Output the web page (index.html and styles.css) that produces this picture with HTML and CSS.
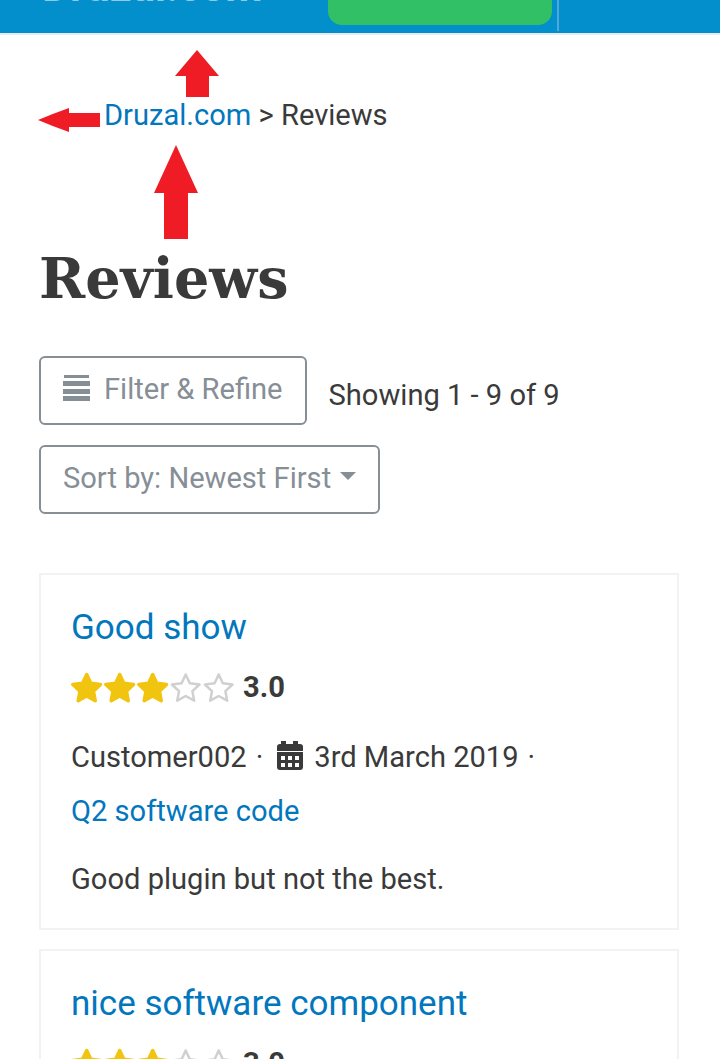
FILE: index.html
```html
<!DOCTYPE html>
<html lang="en">
<head>
  <meta charset="UTF-8" />
  <meta name="viewport" content="width=device-width, initial-scale=1.0"/>
  <title>Reviews</title>
  <link rel="stylesheet" href="styles.css">
</head>
<body>
  <svg class="defs" width="0" height="0">
    <symbol id="star" viewBox="0 0 33 32">
      <path d="M15.7 2.5L19.8 11.3 29.5 12.5 22.4 19.2 24.2 28.7 15.7 24 7.2 28.7 9 19.2 1.9 12.5 11.6 11.3z"/>
    </symbol>
  </svg>

  <header class="topbar">
    <div class="logo">Druzal.com</div>
    <div class="cta"></div>
    <div class="divider"></div>
  </header>

  <main class="page">
    <svg class="arrow arrow-top" viewBox="0 0 44 47"><path d="M22 0L44 26H34V47H11V26H0z"/></svg>
    <svg class="arrow arrow-left" viewBox="0 0 62 24"><path d="M0 12Q14 6 31 0V5H62V19H31V24Q14 18 0 12z"/></svg>
    <svg class="arrow arrow-bottom" viewBox="0 0 44 94"><path d="M22 0L44 48H34V94H10V48H0z"/></svg>

    <p class="crumbs"><a href="#">Druzal.com</a> &gt; Reviews</p>
    <h1>Reviews</h1>

    <div class="toolbar">
      <button type="button" class="btn">
        <svg class="bars" viewBox="0 0 27 26"><path d="M1 0h25v3H1zM0 6h27v5H0zM0 14h27v5H0zM0 21h27v5H0z"/></svg>
        Filter &amp; Refine
      </button>
      <span class="count">Showing 1 - 9 of 9</span>
      <button type="button" class="btn">Sort by: Newest First<span class="caret"></span></button>
    </div>

    <article class="card">
      <h2><a href="#">Good show</a></h2>
      <div class="rating">
        <svg class="star on"><use href="#star"/></svg>
        <svg class="star on"><use href="#star"/></svg>
        <svg class="star on"><use href="#star"/></svg>
        <svg class="star"><use href="#star"/></svg>
        <svg class="star"><use href="#star"/></svg>
        <strong>3.0</strong>
      </div>
      <div class="meta">
        <span>Customer002</span><span>·</span>
        <svg class="cal" viewBox="0 0 26 29"><path fill-rule="evenodd" d="M4 0h5v3h7V0h5v3h2a3 3 0 0 1 3 3v4H0V6a3 3 0 0 1 3-3h1zM0 11h26v15a3 3 0 0 1-3 3H3a3 3 0 0 1-3-3zM4 15v4h4v-4zM11 15v4h4v-4zM18 15v4h4v-4zM4 22v4h4v-4zM11 22v4h4v-4zM18 22v4h4v-4z"/></svg>
        <span>3rd March 2019</span><span>·</span>
      </div>
      <a class="product" href="#">Q2 software code</a>
      <p>Good plugin but not the best.</p>
    </article>

    <article class="card">
      <h2><a href="#">nice software component</a></h2>
      <div class="rating">
        <svg class="star on"><use href="#star"/></svg>
        <svg class="star on"><use href="#star"/></svg>
        <svg class="star on"><use href="#star"/></svg>
        <svg class="star"><use href="#star"/></svg>
        <svg class="star"><use href="#star"/></svg>
        <strong>3.0</strong>
      </div>
    </article>
  </main>
</body>
</html>
```

FILE: styles.css
```css
html, body {
  height: 1059px;
  overflow: hidden;
}
body {
  margin: 0;
  background: #fff;
  color: #3a3a3a;
  font-family: Roboto, sans-serif;
  font-size: 29.1px;
  line-height: 1.5;
}
a {
  color: #0277bd;
  text-decoration: none;
}
.defs {
  position: absolute;
}
.topbar {
  display: flex;
  align-items: flex-end;
  height: 33px;
  overflow: hidden;
  background: #038fcc;
  border-bottom: 2px solid #e8eaeb;
}
.logo {
  width: 286px;
  margin: 0 0 28px 42px;
  color: #8fcbe6;
  font-size: 43px;
  font-weight: 700;
  line-height: 38px;
  white-space: nowrap;
}
.cta {
  width: 224px;
  height: 25px;
  margin-bottom: 8px;
  background: #32c067;
  border-radius: 0 0 14px 14px;
}
.divider {
  width: 2px;
  height: 31px;
  margin: 0 0 2px 5px;
  background: #4fa9d8;
}
.page {
  position: relative;
  padding: 0 40px;
}
.arrow {
  position: absolute;
  fill: #ef1c25;
}
.arrow-top {
  left: 175px;
  top: 15px;
  width: 44px;
  height: 47px;
}
.arrow-left {
  left: 38px;
  top: 73px;
  width: 62px;
  height: 24px;
}
.arrow-bottom {
  left: 154px;
  top: 110px;
  width: 44px;
  height: 94px;
}
.crumbs {
  margin: 0;
  padding: 60px 0 0 64px;
  line-height: 41px;
}
h1 {
  margin: 110px 0 0 -1px;
  font-family: "DejaVu Serif", serif;
  font-size: 55.6px;
  font-weight: 700;
  line-height: 66px;
}
.toolbar {
  display: flex;
  flex-wrap: wrap;
  align-items: center;
  gap: 20px 22px;
  margin: 44px 0 59px -1px;
}
.btn {
  display: flex;
  align-items: center;
  height: 69px;
  padding: 0 22px 1px;
  background: #fff;
  border: 2px solid #868e96;
  border-radius: 6px;
  color: #868e96;
  font: inherit;
}
.bars {
  width: 27px;
  height: 26px;
  margin: 0 14px 4px 0;
  fill: #868e96;
}
.caret {
  width: 0;
  height: 0;
  margin: 0 0 6px 9px;
  border-top: 8px solid #868e96;
  border-left: 8px solid transparent;
  border-right: 8px solid transparent;
}
.count {
  padding-top: 10px;
  margin-right: 100px;
}
.card {
  margin: 0 1px 19px -1px;
  padding: 30px 30px 29px;
  border: 2px solid #f0f3f6;
}
h2 {
  margin: 0;
  font-size: 35px;
  font-weight: 400;
  line-height: 46px;
}
.rating {
  display: flex;
  align-items: center;
  height: 40px;
  margin-top: 17px;
}
.rating strong {
  margin-left: 7px;
}
.star {
  width: 33px;
  height: 32px;
  fill: #fff;
  stroke: #d0d0d0;
  stroke-width: 2.5;
  stroke-linejoin: round;
}
.star.on {
  fill: #f1c40f;
  stroke: #f1c40f;
  stroke-width: 3.5;
}
.meta {
  display: flex;
  align-items: center;
  gap: 9px;
  margin-top: 30px;
  height: 40px;
}
.cal {
  width: 26px;
  height: 29px;
  margin: 0 2px 6px 5px;
  fill: #3a3a3a;
}
.product {
  display: block;
  margin-top: 13px;
  line-height: 40px;
}
.card p {
  margin: 28px 0 0;
  line-height: 40px;
}
```
